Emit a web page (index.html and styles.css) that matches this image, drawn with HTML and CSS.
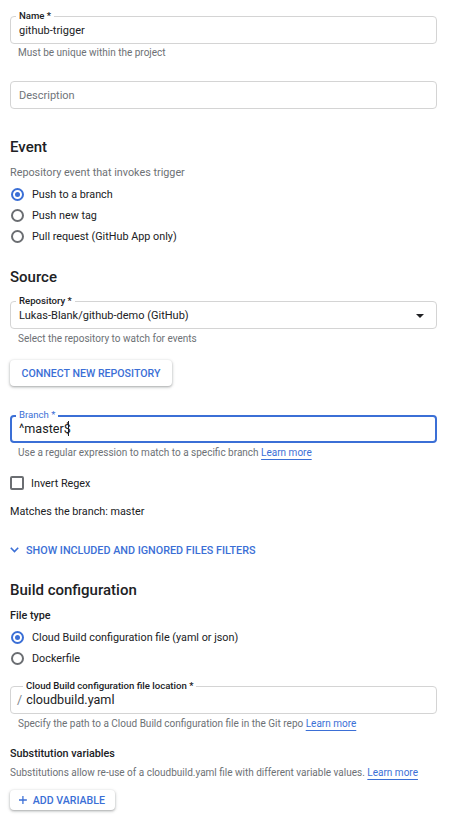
FILE: index.html
```html
<!DOCTYPE html>
<html>
<head>
<meta charset="utf-8">
<link rel="stylesheet" href="styles.css">
</head>
<body>
<div class="page">
  <div class="field field-first">
    <span class="flabel">Name *</span>
    <span class="fvalue">github-trigger</span>
  </div>
  <div class="helper">Must be unique within the project</div>

  <div class="field field-desc">
    <span class="fvalue placeholder">Description</span>
  </div>

  <h2 class="heading h-event">Event</h2>
  <div class="desc">Repository event that invokes trigger</div>
  <div class="radios">
    <div class="radio-row"><span class="radio checked"></span><span>Push to a branch</span></div>
    <div class="radio-row"><span class="radio"></span><span>Push new tag</span></div>
    <div class="radio-row"><span class="radio"></span><span>Pull request (GitHub App only)</span></div>
  </div>

  <h2 class="heading h-source">Source</h2>
  <div class="field field-repo">
    <span class="flabel">Repository *</span>
    <span class="fvalue">Lukas-Blank/github-demo (GitHub)</span>
    <span class="caret"></span>
  </div>
  <div class="helper helper-sm">Select the repository to watch for events</div>

  <button class="btn btn-connect">CONNECT NEW REPOSITORY</button>

  <div class="field field-branch focused">
    <span class="flabel">Branch *</span>
    <span class="fvalue big">^master$<span class="cursor"></span></span>
  </div>
  <div class="helper helper-sm">Use a regular expression to match to a specific branch <a class="link">Learn more</a></div>

  <div class="check-row"><span class="checkbox"></span><span>Invert Regex</span></div>

  <div class="matches">Matches the branch: master</div>

  <div class="toggle">
    <svg class="chev" width="9" height="6" viewBox="0 0 9 6"><path d="M0.8 0.8 L4.5 4.6 L8.2 0.8" fill="none" stroke="#3b6fd6" stroke-width="1.6"/></svg>
    <span>SHOW INCLUDED AND IGNORED FILES FILTERS</span>
  </div>

  <h2 class="heading h-build">Build configuration</h2>
  <div class="sub">File type</div>
  <div class="radios">
    <div class="radio-row"><span class="radio checked"></span><span>Cloud Build configuration file (yaml or json)</span></div>
    <div class="radio-row"><span class="radio"></span><span>Dockerfile</span></div>
  </div>

  <div class="field field-loc">
    <span class="flabel">Cloud Build configuration file location *</span>
    <span class="fvalue big"><span class="prefix">/</span>cloudbuild.yaml</span>
  </div>
  <div class="helper helper-sm">Specify the path to a Cloud Build configuration file in the Git repo <a class="link">Learn more</a></div>

  <div class="sub sub-vars">Substitution variables</div>
  <div class="desc desc-vars">Substitutions allow re-use of a cloudbuild.yaml file with different variable values. <a class="link">Learn more</a></div>

  <button class="btn btn-add">
    <svg width="10" height="10" viewBox="0 0 10 10"><path d="M5 0 V10 M0 5 H10" stroke="#3b6fd6" stroke-width="1.6"/></svg>
    <span>ADD VARIABLE</span>
  </button>
</div>
</body>
</html>
```
FILE: styles.css
```css
* { box-sizing: border-box; }
html, body { margin: 0; padding: 0; background: #fff; }
body {
  font-family: Roboto, "Noto Sans", Arial, sans-serif;
  color: #202124;
  width: 457px;
  height: 829px;
  overflow: hidden;
}
.page {
  padding: 16px 20px 0 10px;
  display: flex;
  flex-direction: column;
  align-items: flex-start;
}
.field {
  position: relative;
  width: 427px;
  height: 28px;
  border: 1px solid #d4d4d4;
  border-radius: 4px;
  display: flex;
  align-items: center;
  padding: 0 8px;
  flex-shrink: 0;
}
.flabel {
  position: absolute;
  left: 5px;
  top: -7px;
  background: #fff;
  padding: 0 3px;
  font-size: 9.6px;
  line-height: 12px;
  font-weight: 500;
  color: #202124;
  white-space: nowrap;
}
.fvalue { font-size: 11px; color: #202124; line-height: 14px; padding-top: 1px; }
.fvalue.big { font-size: 12.6px; line-height: 16px; padding-top: 0; }
.placeholder { color: #70757a; }
.prefix { color: #80868b; margin-right: 4px; margin-left: -2px; }
.helper {
  font-size: 10px;
  line-height: 12px;
  color: #6d7175;
  margin-top: 3px;
  padding-left: 8px;
  white-space: nowrap;
}
.helper-sm { margin-top: 4px; }
.field-desc { margin-top: 22px; }
.heading {
  margin: 0;
  font-size: 15px;
  line-height: 20px;
  font-weight: 500;
  color: #202124;
}
.h-event { margin-top: 28px; }
.h-source { margin-top: 20px; }
.h-build { margin-top: 23px; }
.desc {
  font-size: 10.8px;
  line-height: 14px;
  color: #6d7175;
  margin-top: 9px;
  white-space: nowrap;
}
.radios { display: flex; flex-direction: column; margin-top: 4px; }
.radio-row {
  height: 21px;
  display: flex;
  align-items: center;
  gap: 8px;
  font-size: 10.8px;
  color: #202124;
}
.radio {
  width: 13px;
  height: 13px;
  border: 2px solid #6b6e72;
  border-radius: 50%;
  flex-shrink: 0;
  margin-left: 1px;
  position: relative;
}
.radio.checked { border-color: #3b6fd6; }
.radio.checked::after {
  content: "";
  position: absolute;
  left: 2px; top: 2px;
  width: 5px; height: 5px;
  border-radius: 50%;
  background: #3b6fd6;
}
.field-repo { margin-top: 14px; }
.caret {
  position: absolute;
  right: 12px;
  top: 12px;
  width: 0; height: 0;
  border-left: 4px solid transparent;
  border-right: 4px solid transparent;
  border-top: 4px solid #202124;
}
.btn {
  font-family: Roboto, "Noto Sans", Arial, sans-serif;
  background: #fff;
  border: none;
  border-radius: 4px;
  box-shadow: 0 1px 2px rgba(60,64,67,0.3), 0 1px 3px 1px rgba(60,64,67,0.15);
  color: #3b6fd6;
  font-weight: 500;
  font-size: 10.6px;
  padding: 0 10px;
  display: flex;
  align-items: center;
  white-space: nowrap;
}
.btn-connect { margin-top: 15px; height: 26px; width: 162px; justify-content: center; }
.field-branch { margin-top: 29px; }
.focused { border: 2px solid #3b6fd6; padding: 0 7px; }
.focused .flabel { color: #3b6fd6; top: -8px; left: 4px; font-weight: 400; }
.cursor { display: inline-block; width: 1px; height: 15px; background: #202124; vertical-align: -3px; margin-left: -3px; }
.link {
  color: #3b6fd6;
  text-decoration: underline;
  text-underline-offset: 3px;
  text-decoration-thickness: 1px;
}
.check-row {
  margin-top: 17px;
  height: 14px;
  display: flex;
  align-items: center;
  gap: 7px;
  font-size: 10.8px;
}
.checkbox {
  width: 14px; height: 14px;
  border: 2px solid #6b6e72;
  border-radius: 2px;
  flex-shrink: 0;
}
.matches { margin-top: 15px; font-size: 10.8px; line-height: 14px; }
.toggle {
  margin-top: 24px;
  height: 14px;
  display: flex;
  align-items: center;
  gap: 7px;
  color: #3b6fd6;
  font-weight: 500;
  font-size: 10.8px;
  white-space: nowrap;
}
.sub { margin-top: 9px; font-size: 10.8px; line-height: 14px; font-weight: 500; }
.field-loc { margin-top: 17px; }
.field-loc .flabel { left: 12px; }
.sub-vars { margin-top: 17px; }
.desc-vars { margin-top: 5px; font-size: 10px; }
.btn-add { margin-top: 10px; height: 20px; width: 105px; gap: 6px; padding-left: 9px; }
```
